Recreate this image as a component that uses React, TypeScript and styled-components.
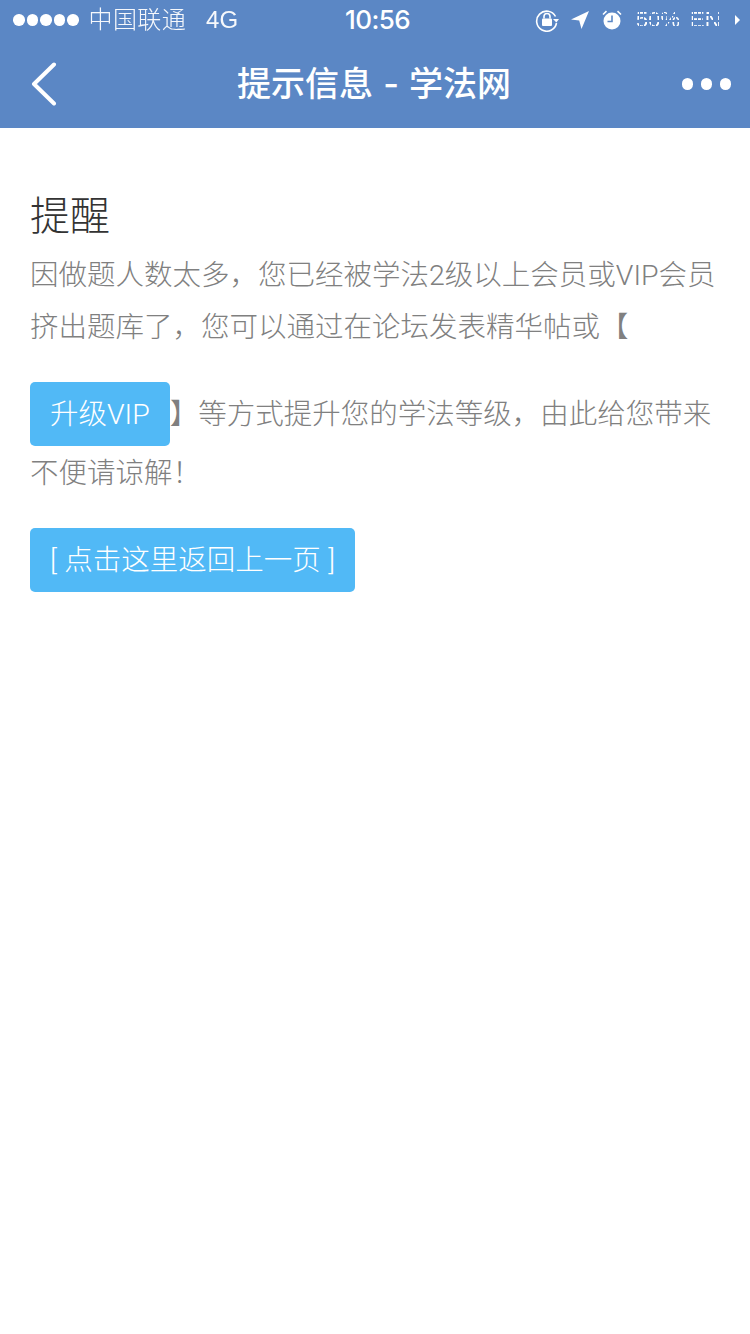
import React from "react";
import styled, { createGlobalStyle } from "styled-components";

const CJK = `Roboto, "Noto Sans CJK SC", sans-serif`;

const Global = createGlobalStyle`
  html, body { margin: 0; padding: 0; background: #fff; }
  body { font-family: ${CJK}; }
`;

const Page = styled.div`
  width: 750px;
  height: 1334px;
  background: #fff;
  overflow: hidden;
`;

const Header = styled.header`
  height: 128px;
  background: #5b87c5;
  color: #fff;
  display: flex;
  flex-direction: column;
`;

const StatusBar = styled.div`
  height: 40px;
  display: grid;
  grid-template-columns: 1fr auto 1fr;
  align-items: center;
  padding: 0 10px 0 13px;
`;

const StatusLeft = styled.div`
  display: flex;
  align-items: center;
`;

const Signal = styled.div`
  display: flex;
  gap: 2px;
  margin-right: 10px;
`;

const Dot = styled.span`
  width: 11.5px;
  height: 11.5px;
  border-radius: 50%;
  background: #fff;
`;

const Carrier = styled.span`
  font-size: 24px;
  line-height: 40px;
  letter-spacing: 0.4px;
  opacity: 0.95;
  font-family: "Liberation Sans", "Noto Sans CJK SC", sans-serif;
  font-weight: 300;
`;

const Network = styled.span`
  font-size: 24px;
  line-height: 40px;
  margin-left: 20px;
  opacity: 0.95;
  font-family: "Liberation Sans", sans-serif;
`;

const Clock = styled.span`
  font-size: 26px;
  line-height: 40px;
  font-weight: 500;
  font-family: Inter, sans-serif;
  letter-spacing: -0.6px;
  margin-left: 2px;
`;

const StatusRight = styled.div`
  display: flex;
  align-items: center;
  justify-content: flex-end;
`;

const StatusIcon = styled.svg`
  display: block;
  flex: none;
`;

const Garbled = styled.div`
  position: relative;
  width: 104px;
  height: 24px;
  margin-left: 14px;
`;

const GarbledText = styled.span<{ $left: number }>`
  position: absolute;
  left: ${(p) => p.$left}px;
  top: 0;
  font-size: 22px;
  line-height: 24px;
  color: #fff;
  font-weight: 400;
  font-family: "Liberation Sans", sans-serif;
  -webkit-mask-image: repeating-linear-gradient(90deg, #000 0 3px, transparent 3px 4px),
    repeating-linear-gradient(0deg, #000 0 4px, transparent 4px 6px);
  -webkit-mask-composite: source-in;
  mask-composite: intersect;
`;

const GarbledTip = styled.span`
  position: absolute;
  right: 0;
  top: 7px;
  width: 0;
  height: 0;
  border-left: 5px solid #fff;
  border-top: 5px solid transparent;
  border-bottom: 5px solid transparent;
`;

const NavBar = styled.nav`
  height: 88px;
  display: grid;
  grid-template-columns: 100px 1fr 100px;
  align-items: center;
`;

const BackButton = styled.div`
  padding-left: 31px;
  display: flex;
  align-items: center;
`;

const NavTitle = styled.h1`
  margin: 0;
  padding-right: 2px;
  text-align: center;
  font-size: 34px;
  line-height: 88px;
  font-weight: 500;
  word-spacing: 1px;
  font-family: Inter, "Noto Sans CJK SC", sans-serif;
`;

const More = styled.div`
  display: flex;
  justify-content: flex-end;
  gap: 7.5px;
  padding-right: 19px;
`;

const MoreDot = styled.span`
  width: 11.5px;
  height: 11.5px;
  border-radius: 50%;
  background: #fff;
`;

const Content = styled.main`
  padding: 64px 30px 0;
`;

const Heading = styled.h2`
  margin: 0 0 8px;
  font-size: 40px;
  line-height: 50px;
  font-weight: 300;
  color: #333;
`;

const Body = styled.p`
  margin: 0;
  font-size: 28.5px;
  line-height: 52px;
  font-weight: 300;
  color: #808080;
`;

const ActionButton = styled.a`
  display: inline-block;
  box-sizing: border-box;
  height: 64px;
  line-height: 62px;
  margin: 28px 0 2px;
  padding: 2px 20px 0;
  border-radius: 5px;
  background: #51b9f6;
  color: #fff;
  font-size: 28.5px;
  font-weight: 300;
  word-spacing: 0.5px;
`;

const BackRow = styled.div`
  display: flex;
`;

export default function App() {
  return (
    <Page>
      <Global />
      <Header>
        <StatusBar>
          <StatusLeft>
            <Signal>
              {[0, 1, 2, 3, 4].map((i) => (
                <Dot key={i} />
              ))}
            </Signal>
            <Carrier>中国联通</Carrier>
            <Network>4G</Network>
          </StatusLeft>
          <Clock>10:56</Clock>
          <StatusRight>
            <StatusIcon width="24" height="24" viewBox="0 0 24 24" fill="none" style={{ marginRight: 11 }}>
              <path d="M20.5 8.5A10 10 0 1 0 21.5 15" stroke="#fff" strokeWidth="1.6" />
              <path d="M18 11l3.4 3.6L24 11z" fill="#fff" />
              <rect x="7" y="10.5" width="10" height="7.5" rx="1" fill="#fff" />
              <path d="M9 10.5V8.5a3 3 0 0 1 6 0v2" stroke="#fff" strokeWidth="1.6" />
            </StatusIcon>
            <StatusIcon width="20" height="20" viewBox="0 0 20 20" style={{ marginRight: 12 }}>
              <path d="M19 1L1 9.5l8.2.9L11.5 19z" fill="#fff" />
            </StatusIcon>
            <StatusIcon width="20" height="20" viewBox="0 0 20 20" fill="none">
              <circle cx="10" cy="11" r="8.5" fill="#fff" />
              <path d="M10 5.5V11.5H5.5" stroke="#5b87c5" strokeWidth="1.6" />
              <path d="M1 4.5L4.5 1.2M19 4.5L15.5 1.2" stroke="#fff" strokeWidth="1.6" />
            </StatusIcon>
            <Garbled>
              <GarbledText $left={0}>50%</GarbledText>
              <GarbledText $left={54}>EN</GarbledText>
              <GarbledTip />
            </Garbled>
          </StatusRight>
        </StatusBar>
        <NavBar>
          <BackButton>
            <svg width="26" height="44" viewBox="0 0 26 44" fill="none">
              <path d="M23 2.5L3 22l20 19.5" stroke="#fff" strokeWidth="4" strokeLinecap="round" strokeLinejoin="round" />
            </svg>
          </BackButton>
          <NavTitle>提示信息 - 学法网</NavTitle>
          <More>
            <MoreDot />
            <MoreDot />
            <MoreDot />
          </More>
        </NavBar>
      </Header>
      <Content>
        <Heading>提醒</Heading>
        <Body>
          因做题人数太多，您已经被学法2级以上会员或VIP会员挤出题库了，您可以通过在论坛发表精华帖或【
          <ActionButton>升级VIP</ActionButton>
          】等方式提升您的学法等级，由此给您带来不便请谅解！
        </Body>
        <BackRow>
          <ActionButton>[ 点击这里返回上一页 ]</ActionButton>
        </BackRow>
      </Content>
    </Page>
  );
}
